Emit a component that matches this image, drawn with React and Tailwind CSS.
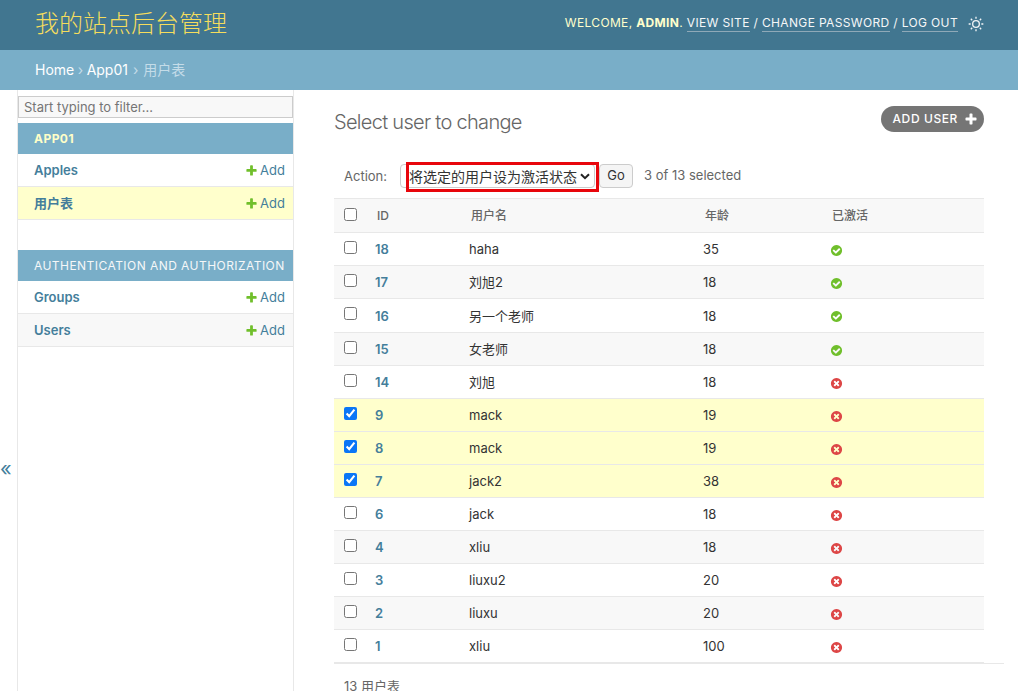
import React from "react";

const FONT = "font-['Inter','Noto_Sans_CJK_SC',sans-serif]";

const USERS = [
  { id: 18, name: "haha", age: 35, active: true },
  { id: 17, name: "刘旭2", age: 18, active: true },
  { id: 16, name: "另一个老师", age: 18, active: true, tall: true },
  { id: 15, name: "女老师", age: 18, active: true },
  { id: 14, name: "刘旭", age: 18, active: false },
  { id: 9, name: "mack", age: 19, active: false, selected: true },
  { id: 8, name: "mack", age: 19, active: false, selected: true },
  { id: 7, name: "jack2", age: 38, active: false, selected: true },
  { id: 6, name: "jack", age: 18, active: false },
  { id: 4, name: "xliu", age: 18, active: false },
  { id: 3, name: "liuxu2", age: 20, active: false },
  { id: 2, name: "liuxu", age: 20, active: false },
  { id: 1, name: "xliu", age: 100, active: false },
];

const PLUS =
  "M1600 796v192q0 40-28 68t-68 28h-416v416q0 40-28 68t-68 28h-192q-40 0-68-28t-28-68v-416h-416q-40 0-68-28t-28-68v-192q0-40 28-68t68-28h416v-416q0-40 28-68t68-28h192q40 0 68 28t28 68v416h416q40 0 68 28t28 68z";
const YES =
  "M1412 734q0-28-18-46l-91-90q-19-19-45-19t-45 19l-408 407-226-226q-19-19-45-19t-45 19l-91 90q-18 18-18 46 0 27 18 45l362 362q19 19 45 19 27 0 46-19l543-543q18-18 18-45zm252 162q0 209-103 385.500t-279.500 279.500-385.500 103-385.500-103-279.500-279.500-103-385.500 103-385.500 279.500-279.500 385.500-103 385.500 103 279.500 279.500 103 385.500z";
const NO =
  "M1277 1122q0-26-19-45l-181-181 181-181q19-19 19-45 0-27-19-46l-90-90q-19-19-46-19-26 0-45 19l-181 181-181-181q-19-19-45-19-27 0-46 19l-90 90q-19 19-19 46 0 26 19 45l181 181-181 181q-19 19-19 45 0 27 19 46l90 90q19 19 46 19 26 0 45-19l181-181 181 181q19 19 45 19 27 0 46-19l90-90q19-19 19-46zm387-226q0 209-103 385.500t-279.500 279.500-385.500 103-385.500-103-279.500-279.500-103-385.500 103-385.500 279.500-279.500 385.500-103 385.500 103 279.500 279.500 103 385.500z";

function Glyph({ d, fill, size = 13 }) {
  return (
    <svg width={size} height={size} viewBox="0 0 1792 1792" className="block shrink-0">
      <path d={d} fill={fill} />
    </svg>
  );
}

function SunIcon() {
  return (
    <svg width="16" height="16" viewBox="0 0 24 24" fill="#f2f5f7" className="block">
      <path d="M12 18a6 6 0 1 1 0-12 6 6 0 0 1 0 12zm0-2a4 4 0 1 0 0-8 4 4 0 0 0 0 8zM11 1h2v3h-2V1zm0 19h2v3h-2v-3zM3.515 4.929l1.414-1.414L7.05 5.636 5.636 7.05 3.515 4.93zM16.95 18.364l1.414-1.414 2.121 2.121-1.414 1.414-2.121-2.121zm2.121-14.85l1.414 1.415-2.121 2.121-1.414-1.414 2.121-2.121zM5.636 16.95l1.414 1.414-2.121 2.121-1.414-1.414 2.121-2.121zM23 11v2h-3v-2h3zM4 11v2H1v-2h3z" />
    </svg>
  );
}

function UserLink({ children }) {
  return <a className="border-b border-[#8fa9b8] pb-px text-[#f5f7f8]">{children}</a>;
}

function SideRow({ label, className = "bg-white" }) {
  return (
    <div className={`flex h-[33px] items-center justify-between border-b border-[#e8e8e8] pl-4 pr-2 pt-px text-[13px] ${className}`}>
      <span className="font-semibold text-[#447e9b]">{label}</span>
      <span className="flex items-center gap-[2px] text-[#447e9b]">
        <Glyph d={PLUS} fill="#70bf2b" />
        Add
      </span>
    </div>
  );
}

function SideCaption({ children, bold }) {
  return (
    <div className={`flex h-[31px] items-center whitespace-nowrap bg-[#79aec8] pl-4 text-[12px] tracking-[0.45px] ${bold ? "font-bold text-[#ffffc8]" : "text-[#f5f7f8]"}`}>
      {children}
    </div>
  );
}

function Sidebar() {
  return (
    <aside className="flex w-[277px] shrink-0 flex-col border-x border-[#e8e8e8] pt-[6px]">
      <input
        readOnly
        placeholder="Start typing to filter..."
        className="mb-[5px] h-[22px] w-full border border-[#ccc] bg-[#f8f8f8] px-[5px] text-[13px] placeholder:text-[#757575]"
      />
      <SideCaption bold>APP01</SideCaption>
      <SideRow label="Apples" />
      <SideRow label="用户表" className="bg-[#ffffcc]" />
      <div className="h-[30px]" />
      <SideCaption>AUTHENTICATION AND AUTHORIZATION</SideCaption>
      <SideRow label="Groups" />
      <SideRow label="Users" className="bg-[#f8f8f8]" />
    </aside>
  );
}

function UserRow({ user, index }) {
  const bg = user.selected ? "bg-[#ffffcc]" : index % 2 ? "bg-[#f8f8f8]" : "bg-white";
  return (
    <tr className={`${bg} ${user.tall ? "h-[34px]" : "h-[33px]"} border-b border-[#e8e8e8]`}>
      <td className="pl-[10px] align-middle">
        <input type="checkbox" readOnly checked={!!user.selected} className="block size-[13px] -translate-y-[2px] accent-[#0a76f6]" />
      </td>
      <td className="pl-[10px] pt-[2px] align-middle font-semibold text-[#447e9b]">{user.id}</td>
      <td className="pl-[10px] pt-[2px] align-middle text-[#333]">{user.name}</td>
      <td className="pl-[10px] pt-[2px] align-middle text-[#333]">{user.age}</td>
      <td className="pl-[8px] pt-[2px] align-middle">
        <Glyph d={user.active ? YES : NO} fill={user.active ? "#70bf2b" : "#dd4646"} />
      </td>
      <td />
    </tr>
  );
}

export default function App() {
  return (
    <div className={`${FONT} flex h-[691px] w-[1018px] flex-col overflow-hidden bg-white text-[13px]`}>
      <header className="flex h-[50px] shrink-0 items-center justify-between bg-[#417690] pb-[2px] pl-[35px] pr-[34px]">
        <div className="text-[24px] font-light text-[#f5dd5d]">我的站点后台管理</div>
        <div className="flex items-center gap-[10px] text-[12px] tracking-[0.35px] text-[#ffffcc]">
          <div className="-translate-y-px whitespace-nowrap">
            WELCOME, <strong className="font-bold">ADMIN</strong>. <UserLink>VIEW SITE</UserLink>{" "}
            <span className="text-[#f5f7f8]">/</span> <UserLink>CHANGE PASSWORD</UserLink>{" "}
            <span className="text-[#f5f7f8]">/</span> <UserLink>LOG OUT</UserLink>
          </div>
          <SunIcon />
        </div>
      </header>

      <nav className="flex h-[40px] shrink-0 items-center bg-[#79aec8] pb-[2px] pl-[35px] text-[14px] text-white">
        <span>Home</span>
        <span className="mx-[3.5px] text-[#c4dce8]">›</span>
        <span>App01</span>
        <span className="mx-[5px] text-[#c4dce8]">›</span>
        <span className="text-[#c4dce8]">用户表</span>
      </nav>

      <div className="flex min-h-0 flex-1">
        <div className="w-[17px] shrink-0 pt-[367px] text-[20px] leading-6 text-[#447e9b]">«</div>
        <Sidebar />

        <main className="min-w-0 flex-1 pl-[40px] pr-[34px] pt-[16px]">
          <div className="flex items-start justify-between">
            <h1 className="pt-[3px] text-[20px] font-light leading-[26px] tracking-[-0.7px] text-[#666]">Select user to change</h1>
            <a className="flex h-[26px] items-center gap-[6px] rounded-[13px] bg-[#757575] pl-3 pr-[6px] text-[12px] font-medium tracking-[0.6px] text-white">
              ADD USER
              <Glyph d={PLUS} fill="#ffffff" size={14} />
            </a>
          </div>

          <div className="mt-[29px] flex h-[24px] items-center pl-[10px] text-[#666]">
            <span className="translate-y-px">Action:</span>
            <div className="relative ml-[13px]">
              <select className="block h-[24px] w-[195px] appearance-none rounded-[4px] border border-[#ccc] bg-white pl-[8px] text-[14px] text-[#333]">
                <option>将选定的用户设为激活状态</option>
              </select>
              <svg width="10" height="7" viewBox="0 0 10 7" className="absolute left-[180px] top-[9px]">
                <path d="M1 1.2 5 5.2 9 1.2" fill="none" stroke="#222" strokeWidth="2" />
              </svg>
              <div className="absolute -top-[2px] left-[6px] h-[30px] w-[193px] border-[3px] border-[#e8060c]" />
            </div>
            <button className="ml-[4px] h-[24px] w-[34px] rounded-[4px] border border-[#ccc] bg-[#f5f5f5] text-[#333]">Go</button>
            <span className="ml-[11px]">3 of 13 selected</span>
          </div>

          <table className="mt-[10px] w-[650px] table-fixed border-collapse">
            <colgroup>
              <col className="w-[31px]" />
              <col className="w-[94px]" />
              <col className="w-[234px]" />
              <col className="w-[129px]" />
              <col className="w-[100px]" />
              <col />
            </colgroup>
            <thead>
              <tr className="h-[34px] border-y border-[#e8e8e8] bg-[#f8f8f8] text-left text-[12px] font-medium text-[#666]">
                <th className="pl-[10px] font-medium">
                  <input type="checkbox" readOnly className="block size-[13px] -translate-y-px" />
                </th>
                <th className="pl-[12px] font-medium">ID</th>
                <th className="pl-[12px] font-medium">用户名</th>
                <th className="pl-[12px] font-medium">年龄</th>
                <th className="pl-[10px] font-medium">已激活</th>
                <th />
              </tr>
            </thead>
            <tbody>
              {USERS.map((user, index) => (
                <UserRow key={user.id} user={user} index={index} />
              ))}
            </tbody>
          </table>

          <div className="-mr-[20px] border-t border-[#e8e8e8] pl-[10px] pt-[13px] text-[#666]">13 用户表</div>
        </main>
      </div>
    </div>
  );
}
